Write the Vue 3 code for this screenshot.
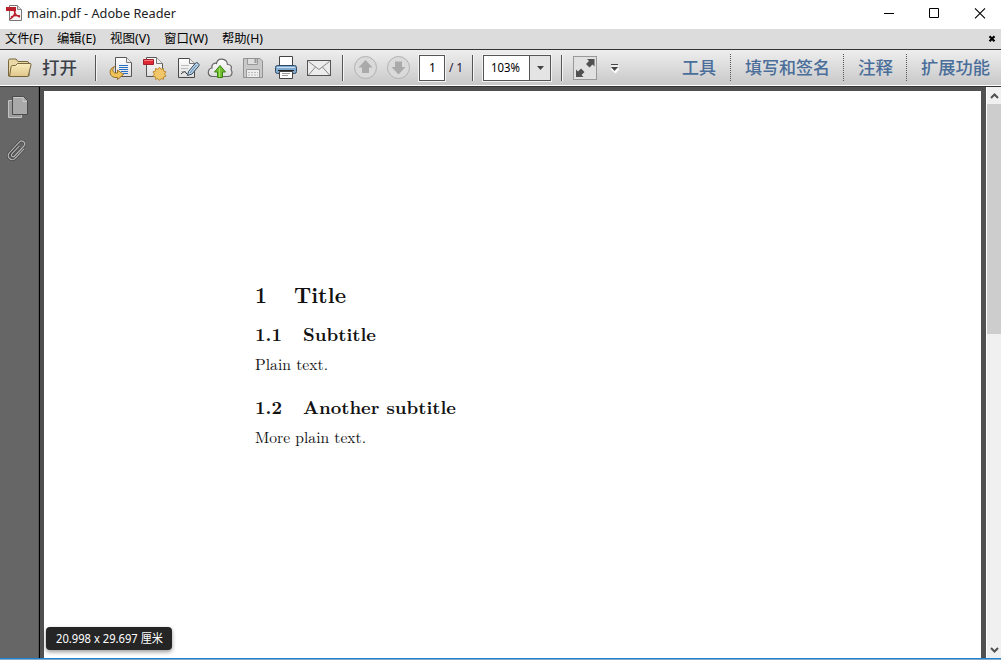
<script setup>
const menus = [
  { label: '文件(F)', width: 38, gap: 5 },
  { label: '编辑(E)', width: 39, gap: 14 },
  { label: '视图(V)', width: 40, gap: 14 },
  { label: '窗口(W)', width: 44, gap: 14 },
  { label: '帮助(H)', width: 41, gap: 14 },
]
const panels = [
  { label: '工具', width: 34 },
  { label: '填写和签名', width: 85 },
  { label: '注释', width: 35 },
  { label: '扩展功能', width: 69 },
]
const sections = [
  { kind: 'h1', number: '1', nw: 12, label: 'Title', width: 52, gap: 27 },
  { kind: 'h2', number: '1.1', nw: 27, label: 'Subtitle', width: 73, gap: 21 },
  { kind: 'p', label: 'Plain text.', width: 73 },
  { kind: 'h2 second', number: '1.2', nw: 27, label: 'Another subtitle', width: 153, gap: 21 },
  { kind: 'p', label: 'More plain text.', width: 111 },
]
</script>

<template>
  <div class="window">
    <header class="titlebar">
      <svg class="logo" width="18" height="29" viewBox="5 0 18 29">
        <path d="M9.500 5.500h8l4 4v11h-12z" fill="#f7f5f5" stroke="#777" />
        <path d="M17.500 5.500v4h4" fill="#ddd" stroke="#888" />
        <path d="M6 7h10v4H6z" fill="#b91e2b" />
        <path d="M14 10c1 4 2 6 6 7M15 11c0 4-1 6-5 8M11 17c3-2 5-2 9-1" fill="none" stroke="#b91e2b" stroke-width="1.400" />
      </svg>
      <svg class="caption" width="149" height="29"><text x="0" y="18" textLength="149" lengthAdjust="spacingAndGlyphs">main.pdf - Adobe Reader</text></svg>
      <svg class="controls" width="121" height="29" viewBox="880 0 121 29" fill="none" stroke="#000">
        <path d="M884 13.500h10M929.500 8.500h9v9h-9z" />
        <path d="M975 8.300l10 10M985 8.300l-10 10" stroke-width="1.100" />
      </svg>
    </header>

    <nav class="menubar">
      <svg v-for="m in menus" :key="m.label" height="20" :width="m.width" :style="{ marginLeft: m.gap + 'px' }">
        <text x="0" y="14" :textLength="m.width" lengthAdjust="spacingAndGlyphs">{{ m.label }}</text>
      </svg>
      <svg class="docclose" width="8" height="20" viewBox="988 29 8 20"><path d="M989.500 36.200l5 5M994.500 36.200l-5 5" stroke="#000" stroke-width="2.200" /></svg>
    </nav>

    <div class="toolbar">
      <svg class="folder" width="26" height="35" viewBox="7 50 26 35">
        <defs>
          <linearGradient id="folder" x2="0" y2="1"><stop stop-color="#faedbd" /><stop offset="1" stop-color="#dfc68a" /></linearGradient>
          <linearGradient id="paper" x2="0" y2="1"><stop stop-color="#fff" /><stop offset="1" stop-color="#dedede" /></linearGradient>
        </defs>
        <path d="M8.500 76V60.500q0-1.500 1.500-1.500h6l2 2.500h9q2 0 2 2V76z" fill="#e9d8a5" stroke="#77653b" />
        <path d="M9.500 76.500l1.500-9.500q.3-1.500 1.500-1.500h3l2-2h12.500q1.300 0 1 1.200l-2.600 10.800q-.3 1-1.400 1z" fill="url(#folder)" stroke="#77653b" />
      </svg>
      <svg class="open" width="35" height="35"><text x="0" y="23.500" textLength="35" lengthAdjust="spacingAndGlyphs">打开</text></svg>
      <i class="separator g18"></i>

      <svg class="g12" width="25" height="35" viewBox="109 50 25 35">
        <path d="M115.500 57.500h11l5 5v14h-16z" fill="url(#paper)" stroke="#555" />
        <path d="M126.500 57.500v5h5" fill="#eee" stroke="#777" />
        <path d="M119 65.500h9M119 67.500h9M119 69.500h9M121 71.500h7M123 73.500h5" stroke="#2870c3" />
        <path d="M114.500 66.500c-6 2-6 10 .5 11h2.500v2l6-5-6-4.500v3h-2c-3-.5-3.500-3.500-1-6.500z" fill="#efc35a" stroke="#936519" stroke-width=".9" />
      </svg>
      <svg class="g8" width="26" height="35" viewBox="142 50 26 35">
        <path d="M146.500 57.500h10l6 6v13h-16z" fill="url(#paper)" stroke="#555" />
        <path d="M156.500 57.500v6h6" fill="#eee" stroke="#777" />
        <path d="M143.500 59.500h10v5h-10z" fill="#df2633" stroke="#a21e29" /><path d="M144 60.500h9" stroke="#f47a7e" />
        <path d="M159.500 67.500l1.700 2.300 2.800-.9v2.900l2.800.8-1.700 2.400 1.700 2.300-2.800.9v2.700l-2.800-.8-1.700 2.100-1.700-2.100-2.800.8v-2.700l-2.800-.9 1.700-2.300-1.700-2.400 2.800-.8v-2.900l2.800.9z" transform="translate(15.950 6.500) scale(.9)" fill="#f2c76a" stroke="#b98525" />
      </svg>
      <svg class="g8" width="25" height="35" viewBox="176 50 25 35">
        <path d="M178.500 58.500h11l5 5v14h-16z" fill="url(#paper)" stroke="#484848" />
        <path d="M189.500 58.500v5h5" fill="#eee" stroke="#777" />
        <path d="M181 65.500h8M181 68.500h7M181 71.500h5" stroke="#bbb" />
        <path d="M181 74q4-4 5-1t4 0" fill="none" stroke="#333" />
        <path d="M187.500 75.500l1-4 7-8.500q1-1 2.500.2t1 2.500l-7 8.300z" fill="#b9d3e8" stroke="#33485c" />
        <path d="M190 73l6.500-8" stroke="#5f89ad" />
      </svg>
      <svg class="g6" width="26" height="35" viewBox="207 50 26 35">
        <path d="M212.500 76.500c-6 0-5-8-.5-8.500-1-4 3-5.500 4.500-4.500 1-6 10-6 11 1 4 0 4.500 3 3.500 5 2 3 1 7-3 7z" fill="url(#paper)" stroke="#666" stroke-width="1.200" />
        <path d="M220 65.500l5.500 6.500h-3v5.500h-5V72h-3z" fill="#70c02d" stroke="#398213" />
        <path d="M219.500 68v9" stroke="#a8e26d" />
      </svg>
      <svg class="g9" width="22" height="35" viewBox="242 50 22 35">
        <path d="M243.500 58.500h16.500l2.500 2.500v16.500h-19z" fill="#c9c9c9" stroke="#929292" />
        <path d="M247.500 59v5.500h10V59" fill="#dedede" stroke="#999" /><path d="M254.500 59v4h2v-4" fill="#999" />
        <path d="M246.500 77v-7.500h13V77" fill="#eee" stroke="#999" />
        <path d="M248 72.500h10M248 75h10" stroke="#bbb" stroke-dasharray="2 1" />
      </svg>
      <svg class="g10" width="24" height="35" viewBox="274 50 24 35">
        <path d="M279.500 66v-9.500h13V66" fill="#fff" stroke="#444" />
        <rect x="275.500" y="65.500" width="21" height="8" rx="2" fill="#80a9cf" stroke="#304a63" />
        <path d="M277 67.500h18" stroke="#c6dff4" />
        <path d="M279.500 71.500h13v7h-13z" fill="#fff" stroke="#444" /><path d="M282 73.500h8M282 75.500h6" stroke="#999" />
        <path d="M278 70.500h16" stroke="#222" />
      </svg>
      <svg class="g8" width="26" height="35" viewBox="306 50 26 35">
        <rect x="307.500" y="60.500" width="23" height="15" fill="#ececec" stroke="#555" />
        <path d="M308.500 61.500l10.500 8 10.500-8M308.500 75l7-8M329.500 75l-7-8" fill="none" stroke="#888" />
      </svg>
      <i class="separator g10"></i>

      <svg v-for="flip in [false, true]" :key="flip" class="pager" width="25" height="35" viewBox="353 50 25 35">
        <circle cx="365.500" cy="67.500" r="11" fill="#dadada" stroke="#b1b1b1" />
        <path d="M365.500 60l7 7.500h-3.500v5.500h-7v-5.500h-3.500z" fill="#aaa" :transform="flip ? 'rotate(180 365.500 67.200)' : undefined" />
      </svg>
      <div class="pagebox"><svg width="7" height="24"><text x="0" y="16">1</text></svg></div>
      <svg class="total" width="15" height="35"><text x="0" y="22" textLength="14">/ 1</text></svg>
      <i class="separator g8"></i>
      <div class="zoombox">
        <svg width="45" height="24"><text x="7" y="16" textLength="29" lengthAdjust="spacingAndGlyphs">103%</text></svg>
        <b><svg width="7" height="4"><path d="M0 0h7L3.500 4z" fill="#444" /></svg></b>
      </div>
      <i class="separator g9"></i>
      <svg class="g9" width="26" height="35" viewBox="572 50 26 35">
        <rect x="573.500" y="56.500" width="23" height="23" fill="#e1e1e1" stroke="#999" />
        <path d="M587 59h7.500v7.500l-2-2-3 3-3.500-3.500 3-3zM576 69.500l2 2 3-3 3.500 3.500-3 3 2 2H576z" fill="#505050" />
      </svg>
      <svg class="g12" width="10" height="35" viewBox="610 50 10 35">
        <path d="M611 66h8M611 69h8l-3.500 4z" fill="#fff" stroke="#fff" />
        <path d="M611 64.500h7" stroke="#444" /><path d="M611 67h7l-3.500 4z" fill="#444" />
      </svg>
      <div class="panels">
        <div v-for="p in panels" :key="p.label" class="panel">
          <svg :width="p.width" height="35"><text x="0" y="23.500" :textLength="p.width" lengthAdjust="spacingAndGlyphs">{{ p.label }}</text></svg>
        </div>
      </div>
    </div>

    <main class="workspace">
      <aside>
        <svg width="38" height="90" viewBox="0 87 38 90">
          <path d="M8.500 100.500h13v17h-13z" fill="#9b9b9b" stroke="#c2c2c2" />
          <path d="M12.500 96.500h11l4 4v14h-15z" fill="#a9a9a9" stroke="#4b4b4b" />
          <path d="M13.500 97.500h9.500v4h4" fill="none" stroke="#ccc" />
          <g transform="translate(17 150.500) rotate(43)" fill="none">
            <path d="M4-6V7a4 4 0 0 1-8 0V-8a3 3 0 0 1 6 0V6a1.700 1.700 0 0 1-3.400 0V-5" stroke="#444" stroke-width="2.600" />
            <path d="M4-6V7a4 4 0 0 1-8 0V-8a3 3 0 0 1 6 0V6a1.700 1.700 0 0 1-3.400 0V-5" stroke="#b5b5b5" stroke-width="1.200" />
          </g>
        </svg>
      </aside>
      <section class="canvas">
        <article>
          <div v-for="s in sections" :key="s.label" :class="['line', s.kind]">
            <svg v-if="s.number" :width="s.nw" height="30" :style="{ marginRight: s.gap + 'px' }"><text x="0" y="22" :textLength="s.nw" lengthAdjust="spacingAndGlyphs">{{ s.number }}</text></svg>
            <svg :width="s.width" height="30"><text x="0" y="22" :textLength="s.width" lengthAdjust="spacingAndGlyphs">{{ s.label }}</text></svg>
          </div>
        </article>
        <div class="size"><svg width="107" height="23"><text x="0" y="16" textLength="107" lengthAdjust="spacingAndGlyphs">20.998 x 29.697 厘米</text></svg></div>
      </section>
      <div class="scrollbar">
        <svg width="14" height="17" viewBox="987 87 14 17"><path d="M991 98l3.500-3.500L998 98" fill="none" stroke="#505050" stroke-width="2" /></svg>
        <div class="thumb"></div>
        <svg class="down" width="14" height="17" viewBox="987 641 14 17"><path d="M991 648l3.500 3.500L998 648" fill="none" stroke="#505050" stroke-width="2" /></svg>
      </div>
    </main>
    <footer></footer>
  </div>
</template>

<style>
body { margin: 0; overflow: hidden; }
</style>
<style scoped>
.window { width: 1001px; height: 660px; display: flex; flex-direction: column; overflow: hidden; font-family: "Noto Sans", "Noto Sans CJK SC", sans-serif; background: #fff; }
svg { display: block; flex: none; overflow: visible; }
.titlebar { height: 29px; display: flex; flex: none; background: #fff; }
.logo { margin-left: 5px; }
.caption { margin-left: 4px; font-size: 12px; fill: #222; }
.controls { margin-left: auto; }
.menubar { height: 20px; display: flex; flex: none; background: #dcdcdc; font-size: 12px; }
.docclose { margin-left: auto; margin-right: 5px; }
.toolbar { height: 35px; display: flex; flex: none; border-top: 1px solid #333; border-bottom: 1px solid #fff; background: linear-gradient(#eee, #c8c8c8); align-items: center; box-shadow: 0 1px #333; position: relative; }
.folder { margin-left: 7px; }
.g6 { margin-left: 6px; }
.g8 { margin-left: 8px; }
.g9 { margin-left: 9px; }
.g10 { margin-left: 10px; }
.g12 { margin-left: 12px; }
.g18 { margin-left: 18px; }
.open { margin-left: 9px; font-size: 17px; fill: #3b3f48; font-weight: 500; }
.separator { width: 1px; height: 26px; background: #555; border-right: 1px solid #f5f5f5; flex: none; }
.pager { margin-left: 9px; }
.pager + .pager { margin-left: 8px; }
.pagebox { width: 24px; height: 24px; margin-left: 8px; border: 1px solid #555; background: #fff; display: flex; justify-content: center; font-size: 12px; flex: none; box-shadow: 0 0 0 1px #f3f3f3; }
.total { margin-left: 4px; font-size: 12px; fill: #281638; }
.zoombox { margin-left: 9px; width: 66px; height: 24px; display: flex; border: 1px solid #555; background: #fff; font-size: 12px; flex: none; box-shadow: 0 0 0 1px #f3f3f3; }
.zoombox b { flex: 1; border-left: 1px solid #555; display: flex; align-items: center; justify-content: center; background: #e4e4e4; }
.zoombox + .separator { margin-left: 10px; }
.panels { margin-left: auto; margin-right: 11px; display: flex; }
.panel { height: 35px; display: flex; font-size: 17px; fill: #4a6e9a; font-weight: 500; }
.panel + .panel { margin-left: 14px; padding-left: 15px; background: repeating-linear-gradient(#555 0 1px, transparent 1px 2px) 0 4px / 1px 27px no-repeat; }
.panel + .panel + .panel { margin-left: 13px; }
.workspace { margin-top: 1px; flex: 1; min-height: 0; display: flex; background: #4d4d4d; }
aside { width: 39px; box-sizing: border-box; background: #666; border-right: 1px solid #555; flex: none; }
.canvas { flex: 1; position: relative; border-left: 1px solid #000; padding: 4px 5px 0 4px; background: #505050; display: flex; }
article { flex: 1; background: #fff; font-family: "Latin Modern Roman", "CMU Serif", "Liberation Serif", serif; padding: 190px 0 0 211px; }
.line { display: flex; height: 30px; fill: #111; }
.h1 { font-size: 22px; font-weight: bold; height: 38px; }
.h2 { font-size: 18px; font-weight: bold; height: 29px; }
.p { font-size: 15px; height: 44px; }
.size { position: absolute; left: 6px; bottom: 8px; width: 126px; height: 23px; border-radius: 4px; background: #252525; fill: #fff; font-size: 12px; display: flex; justify-content: center; box-shadow: 0 2px 4px #0006; }
.scrollbar { width: 14px; border-left: 1px solid #fff; background: #f0f0f0; display: flex; flex-direction: column; flex: none; }
.thumb { height: 230px; background: #cdcdcd; }
.down { margin-top: auto; }
footer { height: 1px; background: #1883d7; border-bottom: 1px solid #8aa9c4; flex: none; }
</style>
